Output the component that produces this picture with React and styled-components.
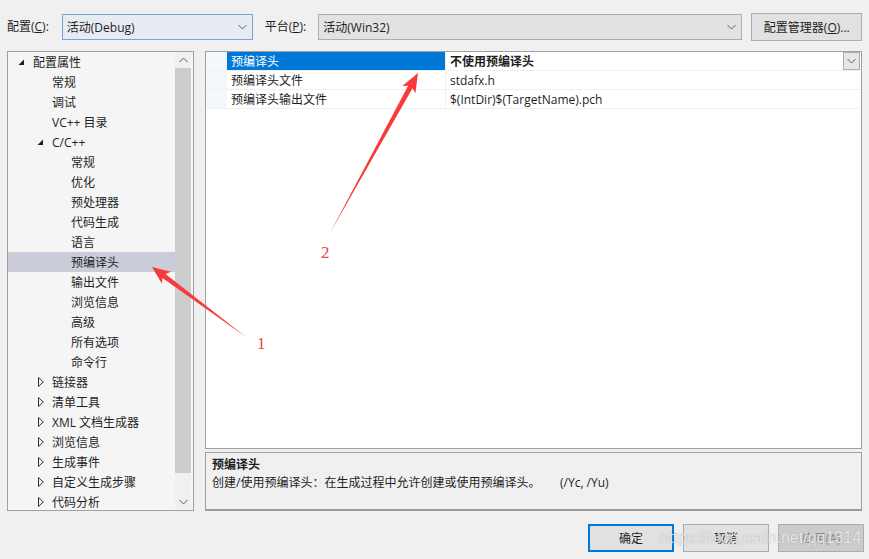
import styled, { createGlobalStyle } from "styled-components"

const Global = createGlobalStyle`
    html, body { margin:0; padding:0; background:#f0f0f0; }
    body {
        font-family: "Open Sans", "Noto Sans CJK SC", sans-serif;
        font-size:12px;
        color:#1e1e1e;
    }
`

const Page = styled.div`
    position:relative;
    width:869px;
    height:559px;
    background:#f0f0f0;
    overflow:hidden;
`
const TopBar = styled.div`
    display:flex;
    align-items:center;
    height:26px;
    padding:14px 0 11px 7px;
`
const Label = styled.span`
    line-height:16px;
    margin-right:${p => p.gap}px;
    white-space:nowrap;
`
const Combo = styled.div`
    display:flex;
    align-items:center;
    justify-content:space-between;
    box-sizing:border-box;
    width:${p => p.w}px;
    height:26px;
    padding:0 5px 0 4px;
    background:${p => p.focused ? "#e6ecf2" : "#e2e2e2"};
    border:1px solid ${p => p.focused ? "#7aa3d4" : "#adadad"};
    margin-right:${p => p.mr}px;
`
const Button = styled.div`
    display:flex;
    align-items:center;
    justify-content:center;
    box-sizing:border-box;
    width:${p => p.w}px;
    height:28px;
    background:${p => p.disabled ? "#cccccc" : "#e1e1e1"};
    color:${p => p.disabled ? "#8a8a8a" : "#1e1e1e"};
    border:${p => p.primary ? "2px solid #0078d7" : "1px solid #adadad"};
    white-space:nowrap;
`
const Main = styled.div`
    display:flex;
    gap:11px;
    height:460px;
    padding:0 7px;
`
const Tree = styled.div`
    display:flex;
    box-sizing:border-box;
    width:187px;
    height:460px;
    border:1px solid #a0a0a0;
    background:#f5f5f5;
    padding-right:2px;
`
const TreeList = styled.div`
    flex:1;
    overflow:hidden;
`
const TreeRow = styled.div`
    display:flex;
    align-items:center;
    height:20px;
    padding-left:${p => 10 + p.level * 19}px;
    background:${p => p.selected ? "#cbccd9" : "transparent"};
    white-space:nowrap;
`
const Toggle = styled.span`
    display:flex;
    align-items:center;
    width:15px;
    height:20px;
    padding-left:${p => p.open ? 0 : 1}px;
    box-sizing:border-box;
`
const ScrollBar = styled.div`
    display:flex;
    flex-direction:column;
    width:16px;
    background:#f0f0f0;
`
const ScrollArrow = styled.div`
    display:flex;
    align-items:center;
    justify-content:center;
    height:16px;
`
const ScrollThumb = styled.div`
    height:405px;
    background:#cdcdcd;
`
const RightCol = styled.div`
    display:flex;
    flex-direction:column;
    gap:3px;
    width:657px;
`
const Grid = styled.div`
    box-sizing:border-box;
    height:398px;
    border:1px solid #a0a0a0;
    background:#ffffff;
`
const PropRow = styled.div`
    display:grid;
    grid-template-columns:21px 219px 1fr;
    height:19px;
    box-sizing:border-box;
    border-bottom:1px solid #eef0f4;
`
const Margin = styled.div`
    background:#f4f7fc;
`
const NameCell = styled.div`
    display:flex;
    align-items:center;
    padding-left:4px;
    background:${p => p.selected ? "#0078d7" : "#ffffff"};
    color:${p => p.selected ? "#ffffff" : "#1e1e1e"};
    border-right:1px solid #eef0f4;
    white-space:nowrap;
`
const ValueCell = styled.div`
    display:flex;
    align-items:center;
    justify-content:space-between;
    padding-left:4px;
    font-weight:${p => p.bold ? 700 : 400};
    white-space:nowrap;
`
const DropBtn = styled.div`
    display:flex;
    align-items:center;
    justify-content:center;
    box-sizing:border-box;
    width:17px;
    height:18px;
    margin-right:1px;
    background:#e6e6e6;
    border:1px solid #adadad;
`
const Desc = styled.div`
    box-sizing:border-box;
    height:59px;
    padding:3px 6px;
    border:1px solid #a0a0a0;
    border-bottom:2px solid #9a9a9a;
    background:#f0f0f0;
`
const DescTitle = styled.div`
    font-weight:700;
    line-height:18px;
`
const DescText = styled.div`
    line-height:18px;
    white-space:nowrap;
`
const DescMain = styled.span`
    display:inline-block;
    width:348px;
`
const Footer = styled.div`
    display:flex;
    justify-content:flex-end;
    gap:9px;
    padding:13px 5px 0 0;
`
const Watermark = styled.div`
    position:absolute;
    left:660px;
    top:529px;
    font-family:"Liberation Sans", Arial, sans-serif;
    font-size:16px;
    color:rgba(255,255,255,0.8);
    text-shadow:0 0 1px rgba(90,90,90,0.6);
    white-space:nowrap;
    pointer-events:none;
`
const Overlay = styled.svg`
    position:absolute;
    left:0;
    top:0;
    pointer-events:none;
`
const Mark = styled.text`
    font-family:"Liberation Serif", serif;
    font-size:17px;
    fill:#f04444;
`

const Chevron = ({ up }) => (
    <svg width="9" height="6" viewBox="0 0 9 6">
        <polyline points={up ? "0.5,5 4.5,1 8.5,5" : "0.5,1 4.5,5 8.5,1"} fill="none" stroke="#606060" strokeWidth="1" />
    </svg>
)

const Expanded = () => (
    <svg width="7" height="7" viewBox="0 0 7 7">
        <polygon points="6,0.5 6,6 0.5,6" fill="#1e1e1e" />
    </svg>
)
const Collapsed = () => (
    <svg width="6" height="10" viewBox="0 0 6 10">
        <polygon points="0.5,0.5 5.3,5 0.5,9.5" fill="none" stroke="#333" strokeWidth="1" />
    </svg>
)

function arrow(tail, tip, headLen, headW, shaftW) {
    const dx = tip[0] - tail[0], dy = tip[1] - tail[1]
    const len = Math.hypot(dx, dy)
    const ux = dx / len, uy = dy / len
    const nx = -uy, ny = ux
    const bx = tip[0] - ux * headLen, by = tip[1] - uy * headLen
    const cx = tip[0] - ux * (headLen + 3), cy = tip[1] - uy * (headLen + 3)
    const pts = [
        tail,
        [bx + nx * shaftW / 2, by + ny * shaftW / 2],
        [cx + nx * headW / 2, cy + ny * headW / 2],
        tip,
        [cx - nx * headW / 2, cy - ny * headW / 2],
        [bx - nx * shaftW / 2, by - ny * shaftW / 2],
    ]
    return pts.map(p => p[0].toFixed(1) + "," + p[1].toFixed(1)).join(" ")
}

const tree = [
    { t: "配置属性", l: 0, open: true },
    { t: "常规", l: 1 },
    { t: "调试", l: 1 },
    { t: "VC++ 目录", l: 1 },
    { t: "C/C++", l: 1, open: true },
    { t: "常规", l: 2 },
    { t: "优化", l: 2 },
    { t: "预处理器", l: 2 },
    { t: "代码生成", l: 2 },
    { t: "语言", l: 2 },
    { t: "预编译头", l: 2, sel: true },
    { t: "输出文件", l: 2 },
    { t: "浏览信息", l: 2 },
    { t: "高级", l: 2 },
    { t: "所有选项", l: 2 },
    { t: "命令行", l: 2 },
    { t: "链接器", l: 1, open: false },
    { t: "清单工具", l: 1, open: false },
    { t: "XML 文档生成器", l: 1, open: false },
    { t: "浏览信息", l: 1, open: false },
    { t: "生成事件", l: 1, open: false },
    { t: "自定义生成步骤", l: 1, open: false },
    { t: "代码分析", l: 1, open: false },
]

const props = [
    { n: "预编译头", v: "不使用预编译头", sel: true },
    { n: "预编译头文件", v: "stdafx.h" },
    { n: "预编译头输出文件", v: "$(IntDir)$(TargetName).pch" },
]

export default function App() {
    return (
        <Page>
            <Global />
            <TopBar>
                <Label gap={13}>配置(<u>C</u>):</Label>
                <Combo w={191} mr={12} focused>
                    <span>活动(Debug)</span>
                    <Chevron />
                </Combo>
                <Label gap={12}>平台(<u>P</u>):</Label>
                <Combo w={424} mr={9}>
                    <span>活动(Win32)</span>
                    <Chevron />
                </Combo>
                <Button w={111}>配置管理器(<u>O</u>)...</Button>
            </TopBar>
            <Main>
                <Tree>
                    <TreeList>
                        {tree.map((r, i) => (
                            <TreeRow key={i} level={r.l} selected={r.sel}>
                                <Toggle open={r.open}>
                                    {r.open === true && <Expanded />}
                                    {r.open === false && <Collapsed />}
                                </Toggle>
                                {r.t}
                            </TreeRow>
                        ))}
                    </TreeList>
                    <ScrollBar>
                        <ScrollArrow><Chevron up /></ScrollArrow>
                        <ScrollThumb />
                        <div style={{ flex: 1 }} />
                        <ScrollArrow><Chevron /></ScrollArrow>
                    </ScrollBar>
                </Tree>
                <RightCol>
                    <Grid>
                        {props.map((p, i) => (
                            <PropRow key={i}>
                                <Margin />
                                <NameCell selected={p.sel}>{p.n}</NameCell>
                                <ValueCell bold={p.sel}>
                                    <span>{p.v}</span>
                                    {p.sel && <DropBtn><Chevron /></DropBtn>}
                                </ValueCell>
                            </PropRow>
                        ))}
                    </Grid>
                    <Desc>
                        <DescTitle>预编译头</DescTitle>
                        <DescText>
                            <DescMain>创建/使用预编译头：在生成过程中允许创建或使用预编译头。</DescMain>
                            (/Yc, /Yu)
                        </DescText>
                    </Desc>
                </RightCol>
            </Main>
            <Footer>
                <Button w={86} primary>确定</Button>
                <Button w={86}>取消</Button>
                <Button w={86} disabled>应用(A)</Button>
            </Footer>
            <Watermark>https://blog.csdn.net/qq1314</Watermark>
            <Overlay width="869" height="559" viewBox="0 0 869 559">
                <polygon points={arrow([246, 337], [152, 267], 15, 15, 5)} fill="#f83a3a" />
                <polygon points={arrow([330, 233], [418, 73], 16, 15, 5)} fill="#f83a3a" />
                <Mark x="257" y="349">1</Mark>
                <Mark x="321" y="258">2</Mark>
            </Overlay>
        </Page>
    )
}
